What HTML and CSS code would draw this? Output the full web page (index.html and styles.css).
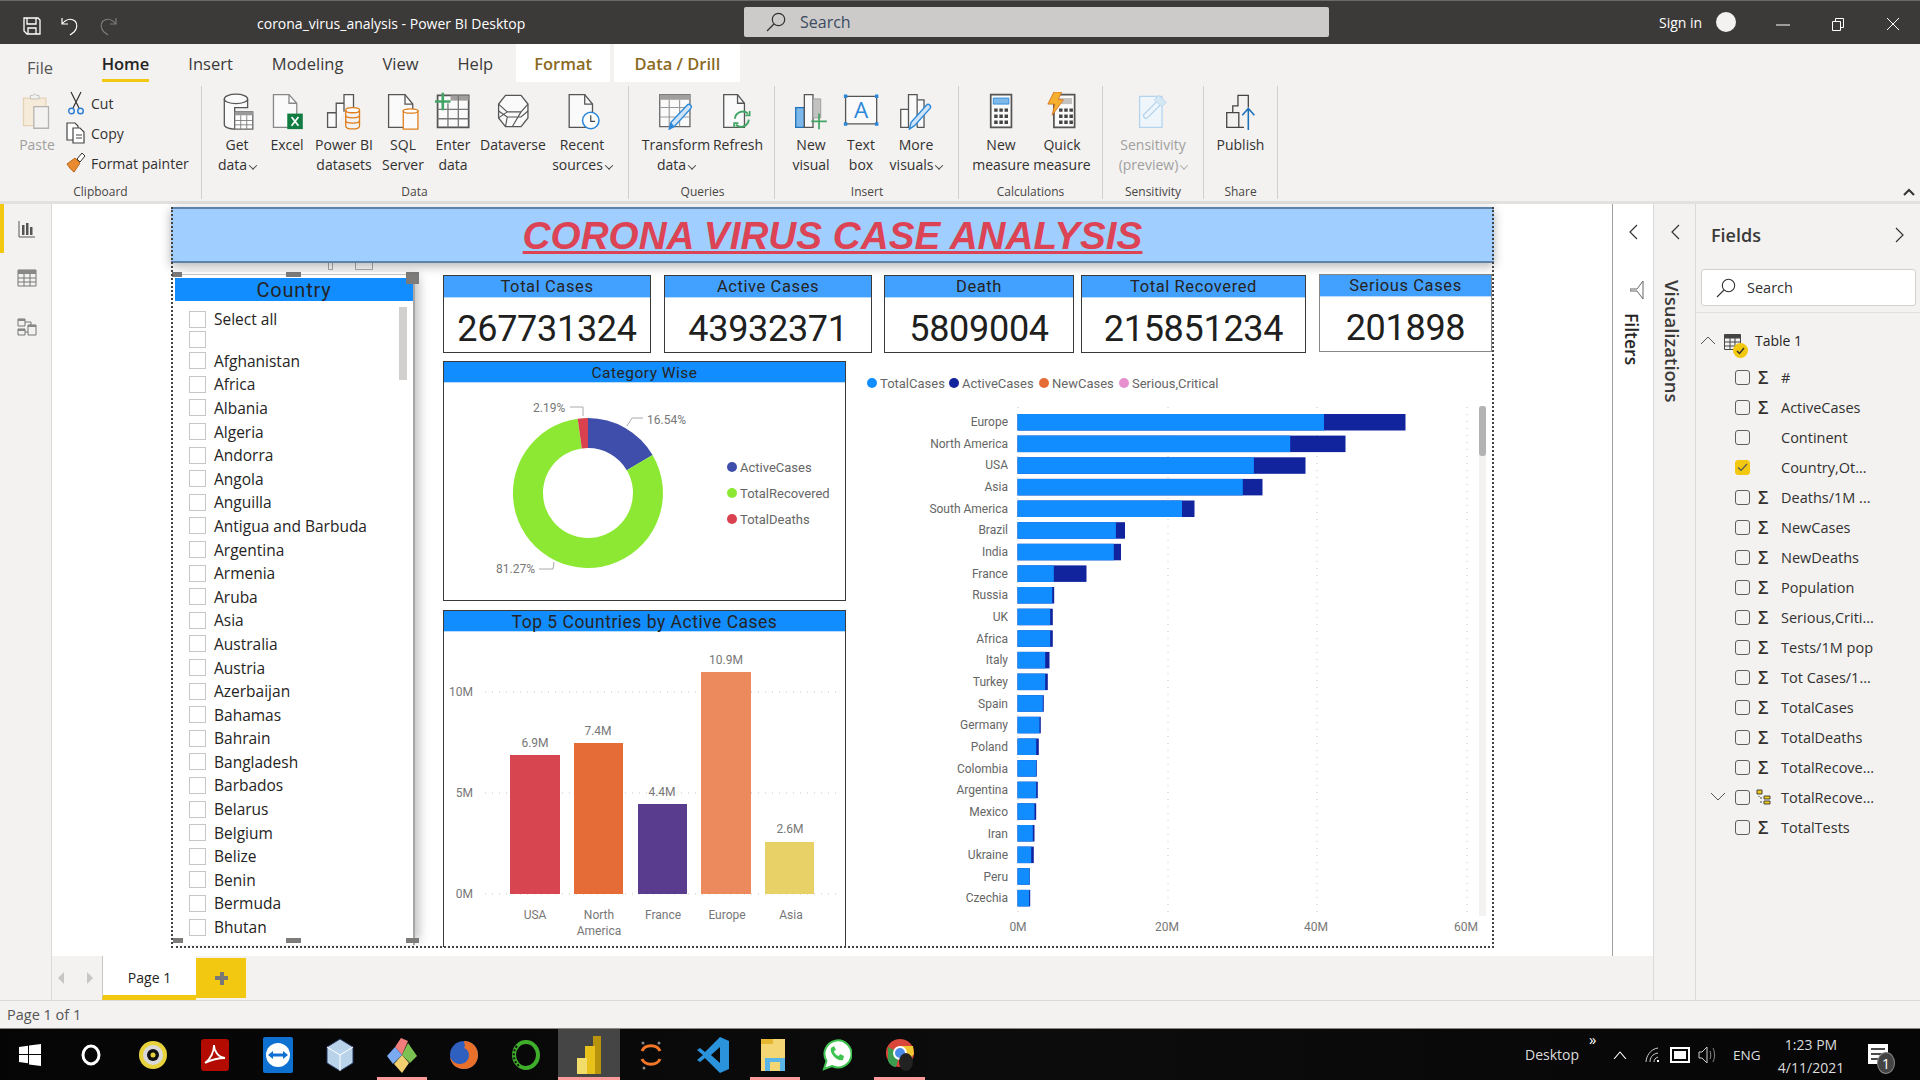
FILE: index.html
```html
<!DOCTYPE html>
<html lang="en">
<head>
    <meta charset="UTF-8">
    <title>corona_virus_analysis - Power BI Desktop</title>
    <link rel="stylesheet" href="styles.css">
</head>
<body>

    <!-- Title bar -->
    <div class="titlebar">
        <div class="quick-icons">
            <svg width="20" height="20" viewBox="0 0 20 20" class="ic-save"><path d="M2 2h14l2 2v14H5l-3-3z" fill="none" stroke="#fff" stroke-width="1.3"/><path d="M5 2v6h9V2M6 18v-6h8v6" fill="none" stroke="#fff" stroke-width="1.3"/></svg>
            <svg width="18" height="20" viewBox="0 0 18 20" class="ic-undo"><path d="M1 2v6h6M1 8c4-5 9-6 13-3 3 3 2 8-1 11l-4 3" fill="none" stroke="#fff" stroke-width="1.2"/></svg>
            <svg width="18" height="20" viewBox="0 0 18 20" class="ic-redo"><path d="M17 2v6h-6M17 8c-4-5-9-6-13-3-3 3-2 8 1 11l4 3" fill="none" stroke="#7d7c7a" stroke-width="1.2"/></svg>
        </div>
        <div class="doc-title">corona_virus_analysis - Power BI Desktop</div>
        <div class="top-search">
            <svg width="20" height="20" viewBox="0 0 20 20"><circle cx="12.5" cy="7.5" r="6.2" fill="none" stroke="#323130" stroke-width="1.2"/><path d="M8 12l-7 7" stroke="#323130" stroke-width="1.2"/></svg>
            <span>Search</span>
        </div>
        <div class="sign-in">Sign in</div>
        <div class="avatar"></div>
        <svg class="win-btn win-min" width="14" height="14" viewBox="0 0 14 14"><path d="M0 8h14" stroke="#fff" stroke-width="1"/></svg>
        <svg class="win-btn win-max" width="14" height="14" viewBox="0 0 14 14"><path d="M1.5 4.5h8v9h-8zM4.5 4.5v-3h8v9h-3" fill="none" stroke="#fff" stroke-width="1"/></svg>
        <svg class="win-btn win-close" width="14" height="14" viewBox="0 0 14 14"><path d="M1 1l12 12M13 1L1 13" stroke="#fff" stroke-width="1"/></svg>
    </div>

    <!-- Ribbon -->
    <div class="ribbon">
        <div class="tabs">
            <div class="tab tab-file">File</div>
            <div class="tab tab-active">Home</div>
            <div class="tab">Insert</div>
            <div class="tab">Modeling</div>
            <div class="tab">View</div>
            <div class="tab">Help</div>
            <div class="tab tab-context">Format</div>
            <div class="tab tab-context tab-drill">Data / Drill</div>
        </div>
        <div class="groups">
            <div class="rgroup g-clipboard">
                <div class="rbuttons">
                    <div class="rbtn w54 disabled">
                        <svg class="ricon" width="40" height="44" viewBox="0 0 40 44"><path d="M4 7h26v32H4z" fill="#f6ead8" stroke="#e5d3b8" stroke-width="1.5"/><path d="M12 8V4h3l2-2 2 2h3v4z" fill="#f3f2f1" stroke="#bbb"/><path d="M16 17h17v25H16z" fill="#f3f2f1" stroke="#b5b3b1" stroke-width="1.5"/></svg>
                        <div>Paste</div>
                    </div>
                    <div class="small-btns">
                        <div class="small-btn"><svg width="18" height="24" viewBox="0 0 18 24"><path d="M4 1l8 16M14 1L6 17" stroke="#333" stroke-width="1.2" fill="none"/><circle cx="4.5" cy="20" r="2.8" fill="none" stroke="#2b7cd3" stroke-width="1.4"/><circle cx="13.5" cy="20" r="2.8" fill="none" stroke="#2b7cd3" stroke-width="1.4"/></svg><span>Cut</span></div>
                        <div class="small-btn"><svg width="20" height="22" viewBox="0 0 20 22"><path d="M1 1h8l3 3v14H1z" fill="#fff" stroke="#444" stroke-width="1.2"/><path d="M7 6h7l4 4v11H7z" fill="#fff" stroke="#444" stroke-width="1.2"/><path d="M10 13h6M10 16h6" stroke="#444"/></svg><span>Copy</span></div>
                        <div class="small-btn"><svg width="20" height="22" viewBox="0 0 20 22"><path d="M1 12l8-6 5 5-6 9c-3-2-5-5-7-8z" fill="#ea8a2e" stroke="#b9651a"/><path d="M11 7l5-6 3 3-5 6z" fill="#fff" stroke="#333"/></svg><span>Format painter</span></div>
                    </div>
                </div>
                <div class="rlabel">Clipboard</div>
            </div>

            <div class="rgroup g-data">
                <div class="rbuttons">
                    <div class="rbtn w52">
                        <svg class="ricon" width="40" height="44" viewBox="0 0 40 44"><path d="M5 8v30c0 3 6 5 12 5V18h15V8" fill="#fafafa" stroke="#555" stroke-width="1.5"/><ellipse cx="18.500" cy="8" rx="13.500" ry="5.500" fill="#fafafa" stroke="#555" stroke-width="1.5"/><path d="M17 23h21v20H17z" fill="#fff" stroke="#666" stroke-width="1.5"/><path d="M17 23h21v4H17z" fill="#999"/><path d="M24 27v16M31 27v16M17 33h21M17 38h21" stroke="#777"/></svg>
                        <div>Get<br>data<span class="caret"></span></div>
                    </div>
                    <div class="rbtn w48">
                        <svg class="ricon" width="40" height="44" viewBox="0 0 40 44"><path d="M4 3h18l9 10v28H4z" fill="#fafafa" stroke="#888" stroke-width="1.5"/><path d="M22 3v10h9" fill="none" stroke="#888" stroke-width="1.5"/><path d="M20 25h18v18H20z" fill="#107c41"/><path d="M25 29l8 10M33 29l-8 10" stroke="#fff" stroke-width="2"/></svg>
                        <div>Excel</div>
                    </div>
                    <div class="rbtn w66">
                        <svg class="ricon" width="44" height="44" viewBox="0 0 44 44"><path d="M3 24h10v17H3zM13 41V13h9v10M22 13V3h11v15" fill="#fafafa" stroke="#555" stroke-width="1.5"/><ellipse cx="32" cy="21" rx="8" ry="3" fill="#fff" stroke="#e07d1a" stroke-width="1.5"/><path d="M24 21v18c0 5 16 5 16 0V21M24 27c0 4 16 4 16 0M24 33c0 4 16 4 16 0" fill="none" stroke="#e07d1a" stroke-width="1.5"/></svg>
                        <div>Power BI<br>datasets</div>
                    </div>
                    <div class="rbtn w52">
                        <svg class="ricon" width="40" height="44" viewBox="0 0 40 44"><path d="M3 3h19l9 11v27H3z" fill="#fafafa" stroke="#555" stroke-width="1.5"/><path d="M22 3v11h9" fill="none" stroke="#555" stroke-width="1.5"/><path d="M20 22h17v21H20z" fill="#fafafa" stroke="#e07d1a" stroke-width="1.5"/><ellipse cx="28.500" cy="22" rx="8.500" ry="2.500" fill="#fff" stroke="#e07d1a" stroke-width="1.5"/></svg>
                        <div>SQL<br>Server</div>
                    </div>
                    <div class="rbtn w48">
                        <svg class="ricon" width="42" height="44" viewBox="0 0 42 44"><path d="M3 4h36v37H3z" fill="#fafafa" stroke="#555" stroke-width="2"/><path d="M18 4h21v6H18z" fill="#a19f9d"/><path d="M3 20h36M3 31h36M15 13v28M27 4v37" stroke="#777" stroke-width="1.5"/><path d="M0 11h18M9 1v20" stroke="#43a565" stroke-width="3"/></svg>
                        <div>Enter<br>data</div>
                    </div>
                    <div class="rbtn w72">
                        <svg class="ricon" width="40" height="44" viewBox="0 0 40 44"><path d="M11 4h18l8 10v16l-8 10H11L3 30V14z" fill="#fafafa" stroke="#555" stroke-width="1.5"/><path d="M3 14l10 9h16l8-9M3 22l10 7h16l8-7M3 30l10-7M13 29l-2 11M29 23l-10 17" fill="none" stroke="#555" stroke-width="1.3"/></svg>
                        <div>Dataverse</div>
                    </div>
                    <div class="rbtn w66">
                        <svg class="ricon" width="42" height="44" viewBox="0 0 42 44"><path d="M6 3h18l9 11v27H6z" fill="#fafafa" stroke="#555" stroke-width="1.5"/><path d="M24 3v11h9" fill="none" stroke="#555" stroke-width="1.5"/><circle cx="31" cy="33" r="9.500" fill="#fff" stroke="#2b88d8" stroke-width="1.8"/><path d="M31 27v7h5" fill="none" stroke="#444" stroke-width="1.4"/></svg>
                        <div>Recent<br>sources<span class="caret"></span></div>
                    </div>
                </div>
                <div class="rlabel">Data</div>
            </div>

            <div class="rgroup g-queries">
                <div class="rbuttons">
                    <div class="rbtn w70">
                        <svg class="ricon" width="42" height="44" viewBox="0 0 42 44"><path d="M2 3h35v37H2z" fill="#fafafa" stroke="#666" stroke-width="1.5"/><path d="M2 3h35v6H2z" fill="#a19f9d"/><path d="M2 18h35M2 29h35M13 9v31M25 9v31" stroke="#999" stroke-width="1.3"/><path d="M13 43l2-8 19-20c2-2 6 1 4 4L19 40z" fill="#cfe4f7" stroke="#2b88d8" stroke-width="1.6"/><path d="M13 43l2-8 4 5z" fill="#2b88d8"/></svg>
                        <div>Transform<br>data<span class="caret"></span></div>
                    </div>
                    <div class="rbtn w54b">
                        <svg class="ricon" width="36" height="44" viewBox="0 0 36 44"><path d="M2 3h16l8 10v28H2z" fill="#fafafa" stroke="#555" stroke-width="1.5"/><path d="M18 3v10h8" fill="none" stroke="#555" stroke-width="1.5"/><path d="M15 31a9 9 0 0 1 15-6M31 32a9 9 0 0 1-15 6" fill="none" stroke="#43a565" stroke-width="2.200"/><path d="M27 27h5v-5M19 36h-5v5" fill="none" stroke="#43a565" stroke-width="2"/></svg>
                        <div>Refresh</div>
                    </div>
                </div>
                <div class="rlabel">Queries</div>
            </div>

            <div class="rgroup g-insert">
                <div class="rbuttons">
                    <div class="rbtn w50">
                        <svg class="ricon" width="40" height="44" viewBox="0 0 40 44"><path d="M2 18h10v23H2z" fill="#7cb9ea" stroke="#1d6fb8" stroke-width="1.500"/><path d="M12 3h10v38H12z" fill="#fafafa" stroke="#555" stroke-width="1.500"/><path d="M22 8h9v22H22z" fill="#c4c2c0" stroke="#999"/><path d="M20 34h18M29 25v18" stroke="#43a565" stroke-width="2"/></svg>
                        <div>New<br>visual</div>
                    </div>
                    <div class="rbtn w50">
                        <svg class="ricon" width="42" height="44" viewBox="0 0 42 44"><path d="M3 5h36v32H3z" fill="#fafafa" stroke="#555" stroke-width="1.500"/><path d="M1 3h4v4H1zM37 3h4v4h-4zM1 35h4v4H1zM37 35h4v4h-4z" fill="#2b88d8"/><text x="21" y="30" class="icon-letter">A</text></svg>
                        <div>Text<br>box</div>
                    </div>
                    <div class="rbtn w60">
                        <svg class="ricon" width="40" height="44" viewBox="0 0 40 44"><path d="M2 20h9v21H2zM11 41V3h10v38M21 9h8v32h-8" fill="#fafafa" stroke="#555" stroke-width="1.500"/><path d="M12 43l2-8 18-20c2-2 6 1 4 4L18 39z" fill="#cfe4f7" stroke="#2b88d8" stroke-width="1.600"/></svg>
                        <div>More<br>visuals<span class="caret"></span></div>
                    </div>
                </div>
                <div class="rlabel">Insert</div>
            </div>

            <div class="rgroup g-calc">
                <div class="rbuttons">
                    <div class="rbtn w64">
                        <svg class="ricon" width="28" height="44" viewBox="0 0 28 44"><path d="M2 3h24v38H2z" fill="#fafafa" stroke="#555" stroke-width="2"/><path d="M5 7h18v7H5z" fill="#7cb9ea" stroke="#2b88d8"/><path d="M6 19h4v4H6zM12 19h4v4h-4zM18 19h4v4h-4zM6 26h4v4H6zM12 26h4v4h-4zM18 26h4v4h-4zM6 33h4v4H6zM12 33h4v4h-4zM18 33h4v4h-4z" fill="#444"/></svg>
                        <div>New<br>measure</div>
                    </div>
                    <div class="rbtn w58">
                        <svg class="ricon" width="34" height="44" viewBox="0 0 34 44"><path d="M8 3h24v38H8z" fill="#fafafa" stroke="#555" stroke-width="2"/><path d="M13 7h16v7H13z" fill="#c4c2c0"/><path d="M14 19h4v4h-4zM20 19h4v4h-4zM26 19h4v4h-4zM14 26h4v4h-4zM20 26h4v4h-4zM26 26h4v4h-4zM14 33h4v4h-4zM20 33h4v4h-4zM26 33h4v4h-4z" fill="#444"/><path d="M8 0h9l-4 9h6L6 27l3-13H1z" fill="#f4b02e" stroke="#d9701a"/></svg>
                        <div>Quick<br>measure</div>
                    </div>
                </div>
                <div class="rlabel">Calculations</div>
            </div>

            <div class="rgroup g-center g-sens">
                <div class="rbuttons">
                    <div class="rbtn w90 disabled">
                        <svg class="ricon" width="36" height="44" viewBox="0 0 36 44"><path d="M3 5h26v36H3z" fill="#eef5fb" stroke="#b5d4ec" stroke-width="1.500"/><path d="M8 26l16-16c3-3 7 2 4 4L12 30c-2 2-6-2-4-4z" fill="none" stroke="#b5d4ec" stroke-width="1.500"/><path d="M25 4l9 8-5 5-9-8z" fill="#d7e8f5" stroke="#b5d4ec"/></svg>
                        <div>Sensitivity<br>(preview)<span class="caret"></span></div>
                    </div>
                </div>
                <div class="rlabel">Sensitivity</div>
            </div>

            <div class="rgroup g-center g-share">
                <div class="rbuttons">
                    <div class="rbtn w70">
                        <svg class="ricon" width="36" height="44" viewBox="0 0 36 44"><path d="M2 24h14v17H2zM9 24V16h6V4h12v14M16 41h6" fill="#f3f2f1" stroke="#444" stroke-width="1.500"/><path d="M27 44V20M20 27l7-8 7 8" fill="none" stroke="#1d6fb8" stroke-width="1.800"/></svg>
                        <div>Publish</div>
                    </div>
                </div>
                <div class="rlabel">Share</div>
            </div>
        </div>
        <svg class="ribbon-collapse" width="12" height="8" viewBox="0 0 12 8"><path d="M1 7l5-5 5 5" fill="none" stroke="#333" stroke-width="2"/></svg>
    </div>

    <div class="workspace">

        <!-- Left rail -->
        <div class="rail">
            <div class="rail-item rail-active"><svg width="18" height="18" viewBox="0 0 18 18"><path d="M1 1v16h16" fill="none" stroke="#555"/><path d="M4 5h2.500v10H4zM8 3h2.500v12H8zM12 7h2.500v8H12z" fill="#555"/></svg></div>
            <div class="rail-item"><svg width="20" height="18" viewBox="0 0 20 18"><path d="M1 1h18v16H1z" fill="none" stroke="#777"/><path d="M1 1h18v4H1z" fill="#888"/><path d="M1 9h18M1 13h18M7 5v12M13 5v12" stroke="#777"/></svg></div>
            <div class="rail-item"><svg width="20" height="20" viewBox="0 0 20 20"><path d="M1 2h7v7H1zM1 12h7v6H1zM11 8h8v10h-8z" fill="none" stroke="#777"/><path d="M1 2h7v2H1zM1 12h7v2H1zM11 8h8v2h-8z" fill="#888"/><path d="M8 5h6v3M8 15h3" fill="none" stroke="#777"/></svg></div>
        </div>

        <div class="center">
            <div class="canvas-row">
                <div class="canvas">
                    <div class="report">

                        <div class="banner"><span>CORONA VIRUS CASE ANALYSIS</span></div>

                        <div class="report-body">

                            <!-- Slicer -->
                            <div class="slicer">
                                <span class="header-stub stub-a"></span>
                                <span class="header-stub stub-b"></span>
                                <span class="handle h-tl"></span>
                                <span class="handle h-tm"></span>
                                <span class="handle h-tr"></span>
                                <span class="handle h-bl"></span>
                                <span class="handle h-bm"></span>
                                <span class="handle h-br"></span>
                                <div class="slicer-head">Country</div>
                                <div class="slicer-scroll"></div>
                                <div class="slicer-items">
                                    <div class="slicer-row row-first"><i></i>Select all</div>
                                    <div class="slicer-row row-blank"><i></i></div>
                                    <div class="slicer-row"><i></i>Afghanistan</div>
                                    <div class="slicer-row"><i></i>Africa</div>
                                    <div class="slicer-row"><i></i>Albania</div>
                                    <div class="slicer-row"><i></i>Algeria</div>
                                    <div class="slicer-row"><i></i>Andorra</div>
                                    <div class="slicer-row"><i></i>Angola</div>
                                    <div class="slicer-row"><i></i>Anguilla</div>
                                    <div class="slicer-row"><i></i>Antigua and Barbuda</div>
                                    <div class="slicer-row"><i></i>Argentina</div>
                                    <div class="slicer-row"><i></i>Armenia</div>
                                    <div class="slicer-row"><i></i>Aruba</div>
                                    <div class="slicer-row"><i></i>Asia</div>
                                    <div class="slicer-row"><i></i>Australia</div>
                                    <div class="slicer-row"><i></i>Austria</div>
                                    <div class="slicer-row"><i></i>Azerbaijan</div>
                                    <div class="slicer-row"><i></i>Bahamas</div>
                                    <div class="slicer-row"><i></i>Bahrain</div>
                                    <div class="slicer-row"><i></i>Bangladesh</div>
                                    <div class="slicer-row"><i></i>Barbados</div>
                                    <div class="slicer-row"><i></i>Belarus</div>
                                    <div class="slicer-row"><i></i>Belgium</div>
                                    <div class="slicer-row"><i></i>Belize</div>
                                    <div class="slicer-row"><i></i>Benin</div>
                                    <div class="slicer-row"><i></i>Bermuda</div>
                                    <div class="slicer-row"><i></i>Bhutan</div>
                                </div>
                            </div>

                            <div class="report-main">

                                <!-- KPI cards -->
                                <div class="kpi-row">
                                    <div class="kpi kpi-total"><div class="kpi-head">Total Cases</div><div class="kpi-value">267731324</div></div>
                                    <div class="kpi kpi-active"><div class="kpi-head">Active Cases</div><div class="kpi-value">43932371</div></div>
                                    <div class="kpi kpi-death"><div class="kpi-head">Death</div><div class="kpi-value">5809004</div></div>
                                    <div class="kpi kpi-recovered"><div class="kpi-head">Total Recovered</div><div class="kpi-value">215851234</div></div>
                                    <div class="kpi kpi-serious"><div class="kpi-head">Serious Cases</div><div class="kpi-value">201898</div></div>
                                </div>

                                <div class="chart-row">
                                    <div class="chart-col">

                                        <!-- Donut -->
                                        <div class="panel panel-donut">
                                            <div class="panel-head">Category Wise</div>
                                            <svg class="chart" width="401" height="218" viewBox="444 383 401 218">
                                                <path d="M588 418A75 75 0 0 1 652.600 455L626.800 470.200A45 45 0 0 0 588 448Z" fill="#3f4eab"/>
                                                <path d="M652.600 455A75 75 0 1 1 577.700 418.700L581.800 448.400A45 45 0 1 0 626.800 470.200Z" fill="#8de834"/>
                                                <path d="M577.700 418.700A75 75 0 0 1 588 418L588 448A45 45 0 0 0 581.800 448.400Z" fill="#d9414f"/>
                                                <path d="M570 407h13v9M643 418h-11l-5 8M539 569h14l1-7" fill="none" stroke="#aaa"/>
                                                <text x="533" y="412" class="tx">2.19%</text>
                                                <text x="647" y="424" class="tx">16.54%</text>
                                                <text x="496" y="573" class="tx">81.27%</text>
                                                <circle cx="732" cy="467" r="5" fill="#3f4eab"/>
                                                <circle cx="732" cy="493" r="5" fill="#8de834"/>
                                                <circle cx="732" cy="519" r="5" fill="#d9414f"/>
                                                <text x="740" y="471.500" class="tx tx-legend">ActiveCases</text>
                                                <text x="740" y="497.500" class="tx tx-legend">TotalRecovered</text>
                                                <text x="740" y="523.500" class="tx tx-legend">TotalDeaths</text>
                                            </svg>
                                        </div>

                                        <!-- Top 5 -->
                                        <div class="panel panel-top5">
                                            <div class="panel-head head-top5">Top 5 Countries by Active Cases</div>
                                            <svg class="chart" width="401" height="315" viewBox="444 632 401 315">
                                                <path d="M485 692H839M485 793H839M485 894H839" class="grid"/>
                                                <rect x="510" y="755" width="50" height="139" fill="#d64550"/>
                                                <rect x="574" y="743" width="49" height="151" fill="#e66c37"/>
                                                <rect x="638" y="804" width="49" height="90" fill="#5a3c8f"/>
                                                <rect x="701" y="672" width="50" height="222" fill="#ec8a5e"/>
                                                <rect x="765" y="842" width="49" height="52" fill="#e8d166"/>
                                                <text x="473" y="696" class="tx ta-end">10M</text>
                                                <text x="473" y="797" class="tx ta-end">5M</text>
                                                <text x="473" y="898" class="tx ta-end">0M</text>
                                                <text x="535" y="747" class="tx ta-mid">6.9M</text>
                                                <text x="598" y="735" class="tx ta-mid">7.4M</text>
                                                <text x="662" y="796" class="tx ta-mid">4.4M</text>
                                                <text x="726" y="664" class="tx ta-mid">10.9M</text>
                                                <text x="790" y="833" class="tx ta-mid">2.6M</text>
                                                <text x="535" y="919" class="tx ta-mid">USA</text>
                                                <text x="599" y="919" class="tx ta-mid">North</text>
                                                <text x="599" y="935" class="tx ta-mid">America</text>
                                                <text x="663" y="919" class="tx ta-mid">France</text>
                                                <text x="727" y="919" class="tx ta-mid">Europe</text>
                                                <text x="791" y="919" class="tx ta-mid">Asia</text>
                                            </svg>
                                        </div>
                                    </div>

                                    <!-- Stacked bars -->
                                    <svg class="chart barchart" width="647" height="581" viewBox="846 366 647 581">
                                        <circle cx="872" cy="383" r="5" fill="#118dff"/><text x="880" y="387.500" class="tx tx-legend">TotalCases</text>
                                        <circle cx="954" cy="383" r="5" fill="#12239e"/><text x="962" y="387.500" class="tx tx-legend">ActiveCases</text>
                                        <circle cx="1044" cy="383" r="5" fill="#e66c37"/><text x="1052" y="387.500" class="tx tx-legend">NewCases</text>
                                        <circle cx="1124" cy="383" r="5" fill="#e88fd0"/><text x="1132" y="387.500" class="tx tx-legend">Serious,Critical</text>
                                        <path d="M1018 407V916M1168 407V916M1317 407V916M1467 407V916" class="grid"/>
                                        <rect x="1479" y="406" width="7" height="510" fill="#f3f2f1"/>
                                        <rect x="1479" y="406" width="7" height="50" rx="3" fill="#b3b3b3"/>

                                        <g class="bar-labels">
                                            <text x="1008" y="426">Europe</text>
                                            <text x="1008" y="448">North America</text>
                                            <text x="1008" y="469">USA</text>
                                            <text x="1008" y="491">Asia</text>
                                            <text x="1008" y="513">South America</text>
                                            <text x="1008" y="534">Brazil</text>
                                            <text x="1008" y="556">India</text>
                                            <text x="1008" y="578">France</text>
                                            <text x="1008" y="599">Russia</text>
                                            <text x="1008" y="621">UK</text>
                                            <text x="1008" y="643">Africa</text>
                                            <text x="1008" y="664">Italy</text>
                                            <text x="1008" y="686">Turkey</text>
                                            <text x="1008" y="708">Spain</text>
                                            <text x="1008" y="729">Germany</text>
                                            <text x="1008" y="751">Poland</text>
                                            <text x="1008" y="773">Colombia</text>
                                            <text x="1008" y="794">Argentina</text>
                                            <text x="1008" y="816">Mexico</text>
                                            <text x="1008" y="838">Iran</text>
                                            <text x="1008" y="859">Ukraine</text>
                                            <text x="1008" y="881">Peru</text>
                                            <text x="1008" y="902">Czechia</text>
                                        </g>

                                        <g fill="#12239e">
                                            <rect x="1017.500" y="414" width="388" height="16.500"/>
                                            <rect x="1017.500" y="435.600" width="328" height="16.500"/>
                                            <rect x="1017.500" y="457.300" width="288" height="16.500"/>
                                            <rect x="1017.500" y="478.900" width="245" height="16.500"/>
                                            <rect x="1017.500" y="500.500" width="177" height="16.500"/>
                                            <rect x="1017.500" y="522.200" width="107.500" height="16.500"/>
                                            <rect x="1017.500" y="543.800" width="103.500" height="16.500"/>
                                            <rect x="1017.500" y="565.400" width="69" height="16.500"/>
                                            <rect x="1017.500" y="587" width="36.700" height="16.500"/>
                                            <rect x="1017.500" y="608.700" width="35.300" height="16.500"/>
                                            <rect x="1017.500" y="630.300" width="35.300" height="16.500"/>
                                            <rect x="1017.500" y="651.900" width="32" height="16.500"/>
                                            <rect x="1017.500" y="673.600" width="30.300" height="16.500"/>
                                            <rect x="1017.500" y="695.200" width="26.300" height="16.500"/>
                                            <rect x="1017.500" y="716.800" width="23.300" height="16.500"/>
                                            <rect x="1017.500" y="738.500" width="21.300" height="16.500"/>
                                            <rect x="1017.500" y="760.100" width="19.300" height="16.500"/>
                                            <rect x="1017.500" y="781.700" width="20.300" height="16.500"/>
                                            <rect x="1017.500" y="803.300" width="18.700" height="16.500"/>
                                            <rect x="1017.500" y="825" width="17" height="16.500"/>
                                            <rect x="1017.500" y="846.600" width="16.300" height="16.500"/>
                                            <rect x="1017.500" y="868.200" width="12.300" height="16.500"/>
                                            <rect x="1017.500" y="889.900" width="12.700" height="16.500"/>
                                        </g>
                                        <g fill="#118dff">
                                            <rect x="1017.500" y="414" width="306.500" height="16.500"/>
                                            <rect x="1017.500" y="435.600" width="272.700" height="16.500"/>
                                            <rect x="1017.500" y="457.300" width="236.400" height="16.500"/>
                                            <rect x="1017.500" y="478.900" width="225.300" height="16.500"/>
                                            <rect x="1017.500" y="500.500" width="164.500" height="16.500"/>
                                            <rect x="1017.500" y="522.200" width="98.400" height="16.500"/>
                                            <rect x="1017.500" y="543.800" width="96.300" height="16.500"/>
                                            <rect x="1017.500" y="565.400" width="36.300" height="16.500"/>
                                            <rect x="1017.500" y="587" width="34.700" height="16.500"/>
                                            <rect x="1017.500" y="608.700" width="32.700" height="16.500"/>
                                            <rect x="1017.500" y="630.300" width="32.700" height="16.500"/>
                                            <rect x="1017.500" y="651.900" width="27.700" height="16.500"/>
                                            <rect x="1017.500" y="673.600" width="27.700" height="16.500"/>
                                            <rect x="1017.500" y="695.200" width="25.300" height="16.500"/>
                                            <rect x="1017.500" y="716.800" width="22" height="16.500"/>
                                            <rect x="1017.500" y="738.500" width="18.700" height="16.500"/>
                                            <rect x="1017.500" y="760.100" width="18.700" height="16.500"/>
                                            <rect x="1017.500" y="781.700" width="18.700" height="16.500"/>
                                            <rect x="1017.500" y="803.300" width="17" height="16.500"/>
                                            <rect x="1017.500" y="825" width="15.300" height="16.500"/>
                                            <rect x="1017.500" y="846.600" width="13.700" height="16.500"/>
                                            <rect x="1017.500" y="868.200" width="12" height="16.500"/>
                                            <rect x="1017.500" y="889.900" width="11.700" height="16.500"/>
                                        </g>
                                        <text x="1018" y="931" class="tx ta-mid">0M</text>
                                        <text x="1167" y="931" class="tx ta-mid">20M</text>
                                        <text x="1316" y="931" class="tx ta-mid">40M</text>
                                        <text x="1466" y="931" class="tx ta-mid">60M</text>
                                    </svg>
                                </div>
                            </div>
                        </div>

                        <div class="focus-frame"></div>
                    </div>
                </div>

                <!-- Filters pane -->
                <div class="filters-pane">
                    <svg class="chev" width="10" height="16" viewBox="0 0 10 16"><path d="M9 1L2 8l7 7" fill="none" stroke="#333" stroke-width="1.200"/></svg>
                    <svg class="funnel" width="14" height="22" viewBox="0 0 14 22"><path d="M0 10h7l6-8v18l-6-8H0z" fill="none" stroke="#666"/></svg>
                    <div class="side-title filters-title">Filters</div>
                </div>
            </div>

            <!-- Page tabs -->
            <div class="pagebar">
                <svg class="page-nav" width="8" height="14" viewBox="0 0 8 14"><path d="M7 1L1 7l6 6z" fill="#c8c6c4"/></svg>
                <svg class="page-nav nav-next" width="8" height="14" viewBox="0 0 8 14"><path d="M1 1l6 6-6 6z" fill="#c8c6c4"/></svg>
                <div class="page-tab">Page 1</div>
                <div class="page-add"><span></span></div>
            </div>
        </div>

        <!-- Visualizations pane (collapsed) -->
        <div class="viz-pane">
            <svg class="chev" width="10" height="16" viewBox="0 0 10 16"><path d="M9 1L2 8l7 7" fill="none" stroke="#333" stroke-width="1.200"/></svg>
            <div class="side-title viz-title">Visualizations</div>
        </div>

        <!-- Fields pane -->
        <div class="fields-pane">
            <div class="fields-head">
                <span>Fields</span>
                <svg width="10" height="16" viewBox="0 0 10 16"><path d="M1 1l7 7-7 7" fill="none" stroke="#333" stroke-width="1.200"/></svg>
            </div>
            <div class="fields-search">
                <svg width="20" height="20" viewBox="0 0 20 20"><circle cx="12.500" cy="7.500" r="6.200" fill="none" stroke="#323130" stroke-width="1.100"/><path d="M8 12l-7 7" stroke="#323130" stroke-width="1.100"/></svg>
                <span>Search</span>
            </div>
            <div class="fields-table">
                <svg class="tbl-chev" width="16" height="9" viewBox="0 0 16 9"><path d="M1 8l7-7 7 7" fill="none" stroke="#555"/></svg>
                <svg class="tbl-icon" width="17" height="16" viewBox="0 0 17 16"><path d="M.5.5h16v15H.5z" fill="#f3f2f1" stroke="#444"/><path d="M.5.5h16v4H.5z" fill="#444"/><path d="M.5 8h16M.500 12h16M6 4v12M11 4v12" stroke="#444"/></svg>
                <span class="tbl-badge"><svg width="9" height="8" viewBox="0 0 9 8"><path d="M1 4l2.500 2.500L8 1" fill="none" stroke="#333" stroke-width="1.500"/></svg></span>
                <span>Table 1</span>
            </div>
            <div class="field-row"><i class="box"></i><b>Σ</b><span>#</span></div>
            <div class="field-row"><i class="box"></i><b>Σ</b><span>ActiveCases</span></div>
            <div class="field-row"><i class="box"></i><b></b><span>Continent</span></div>
            <div class="field-row"><i class="box box-on"><svg width="11" height="9" viewBox="0 0 11 9"><path d="M1 4.500l3 3L10 1" fill="none" stroke="#555" stroke-width="1.200"/></svg></i><b></b><span>Country,Ot...</span></div>
            <div class="field-row"><i class="box"></i><b>Σ</b><span>Deaths/1M ...</span></div>
            <div class="field-row"><i class="box"></i><b>Σ</b><span>NewCases</span></div>
            <div class="field-row"><i class="box"></i><b>Σ</b><span>NewDeaths</span></div>
            <div class="field-row"><i class="box"></i><b>Σ</b><span>Population</span></div>
            <div class="field-row"><i class="box"></i><b>Σ</b><span>Serious,Criti...</span></div>
            <div class="field-row"><i class="box"></i><b>Σ</b><span>Tests/1M pop</span></div>
            <div class="field-row"><i class="box"></i><b>Σ</b><span>Tot Cases/1...</span></div>
            <div class="field-row"><i class="box"></i><b>Σ</b><span>TotalCases</span></div>
            <div class="field-row"><i class="box"></i><b>Σ</b><span>TotalDeaths</span></div>
            <div class="field-row"><i class="box"></i><b>Σ</b><span>TotalRecove...</span></div>
            <div class="field-row">
                <svg class="row-chev" width="16" height="9" viewBox="0 0 16 9"><path d="M1 1l7 7 7-7" fill="none" stroke="#555"/></svg>
                <i class="box"></i>
                <b><svg width="15" height="16" viewBox="0 0 15 16"><path d="M1 1h5v4H1zM8 7h6v3H8zM8 12h6v3H8z" fill="#f2c811" stroke="#444"/><path d="M3 7v1M4 9h2M4 13h2" stroke="#444"/></svg></b>
                <span>TotalRecove...</span>
            </div>
            <div class="field-row"><i class="box"></i><b>Σ</b><span>TotalTests</span></div>
        </div>
    </div>

    <div class="statusbar">Page 1 of 1</div>

    <!-- Windows taskbar -->
    <div class="taskbar">
        <div class="task task-start"><svg width="22" height="22" viewBox="0 0 22 22"><path d="M0 3l9-1.300V10H0zM10 1.500L22 0v10H10zM0 11h9v8.300L0 18zM10 11h12v11l-12-1.600z" fill="#fff"/></svg></div>
        <div class="task"><svg width="22" height="24" viewBox="0 0 22 24"><ellipse cx="11" cy="12" rx="8" ry="9" fill="none" stroke="#fff" stroke-width="3"/></svg></div>
        <div class="task"><svg width="30" height="30" viewBox="0 0 30 30"><circle cx="15" cy="15" r="14" fill="#e8d23c"/><circle cx="15" cy="15" r="10" fill="#d9d9d9"/><circle cx="15" cy="15" r="6" fill="#111"/><circle cx="15" cy="15" r="2.500" fill="#e8d23c"/></svg></div>
        <div class="task"><svg width="28" height="32" viewBox="0 0 28 32"><rect width="28" height="32" rx="3" fill="#b30b00"/><path d="M4 24c6-4 9-12 9-18 0 6 4 12 11 13-7 0-14 2-20 5z" fill="none" stroke="#fff" stroke-width="1.800"/></svg></div>
        <div class="task"><svg width="30" height="36" viewBox="0 0 30 36"><rect width="30" height="36" rx="2" fill="#0e70d1"/><circle cx="15" cy="18" r="12" fill="#fff"/><path d="M5 18l5-4v2.500h10V14l5 4-5 4v-2.500H10V22z" fill="#0e70d1"/></svg></div>
        <div class="task"><svg width="28" height="34" viewBox="0 0 28 34"><path d="M14 1l13 8v16l-13 8-13-8V9z" fill="#b9d3ea" stroke="#25365a"/><path d="M1 9l13 8 13-8M14 17v16" fill="none" stroke="#fff"/></svg></div>
        <div class="task"><svg width="30" height="36" viewBox="0 0 30 36"><path d="M15 18l-7-8 6-9 7 3-6 14z" fill="#f07c7c"/><path d="M15 18L8 10l-8 9 6 8z" fill="#7caaf0"/><path d="M15 18l6-12 9 13-7 7z" fill="#7bc253"/><path d="M15 18l-8 9 8 9 7-10z" fill="#f0d070"/></svg></div>
        <div class="task"><svg width="30" height="32" viewBox="0 0 30 32"><circle cx="15" cy="16" r="14" fill="#2f5fbf"/><path d="M15 2c8 0 14 6 14 14s-6 14-14 14C7 30 2 25 1 18c2 4 5 7 10 7 5 0 9-4 9-9 0-3-2-6-5-7 2-2 0-5 0-7z" fill="#e8702a"/></svg></div>
        <div class="task"><svg width="30" height="32" viewBox="0 0 30 32"><ellipse cx="15" cy="16" rx="12" ry="13" fill="none" stroke="#3fae2a" stroke-width="4"/><path d="M6 7C1 13 2 22 8 27" fill="none" stroke="#111" stroke-width="2" stroke-dasharray="2 2"/></svg></div>
        <div class="task task-open"><svg width="24" height="38" viewBox="0 0 24 38"><path d="M16 0h8v38h-8z" fill="#b8930c"/><path d="M8 10h10v28H8z" fill="#e8c21a"/><path d="M0 22h10v16H0z" fill="#f2dc6a"/></svg></div>
        <div class="task"><svg width="24" height="32" viewBox="0 0 24 32"><path d="M3 12C6 5 18 5 21 12" fill="none" stroke="#f37726" stroke-width="3"/><path d="M3 20c3 7 15 7 18 0" fill="none" stroke="#f37726" stroke-width="3"/><circle cx="4" cy="4" r="1.500" fill="#888"/><circle cx="20" cy="4" r="1.500" fill="#888"/><circle cx="5" cy="29" r="1.500" fill="#888"/></svg></div>
        <div class="task"><svg width="32" height="36" viewBox="0 0 32 36"><path d="M23 0l9 4v28l-9 4L8 21l-5 4-3-2 6-5-6-5 3-2 5 4z" fill="#2a93dc"/><path d="M23 10v16l-9-8z" fill="#0b0b0b"/></svg></div>
        <div class="task"><svg width="28" height="34" viewBox="0 0 28 34"><path d="M0 1h24v32H0z" fill="#f4d774"/><path d="M0 1h12v5H0z" fill="#e6b832"/><path d="M4 20h20v13H4z" fill="#5bb6e8"/><path d="M9 24h10v9H9z" fill="#f4d774"/></svg></div>
        <div class="task"><svg width="30" height="32" viewBox="0 0 30 32"><path d="M2 30l2.500-8A13.500 13.500 0 1 1 10 27z" fill="#fff" stroke="#3fc351" stroke-width="2"/><path d="M9 9c-2 5 6 14 12 12l1-4-4-2-1 2c-2 0-5-3-5-5l2-1-2-4z" fill="#3fc351"/></svg></div>
        <div class="task"><svg width="30" height="34" viewBox="0 0 30 34"><circle cx="15" cy="15" r="14" fill="#d9463a"/><path d="M15 15L3 9v14c2 4 5 6 8 6z" fill="#3c9d4f"/><path d="M15 8h13l1 8-7 8z" fill="#f3c72f"/><circle cx="15" cy="15" r="6" fill="#4a8ae8" stroke="#fff" stroke-width="2"/><ellipse cx="21" cy="24" rx="7" ry="9" fill="#222"/></svg></div>
        <div class="tray">
            <span class="tray-desktop">Desktop</span>
            <span class="tray-more">»</span>
            <svg class="tray-up" width="14" height="8" viewBox="0 0 14 8"><path d="M1 8l6-7 6 7" fill="none" stroke="#fff" stroke-width="1.100"/></svg>
            <svg class="tray-wifi" width="14" height="16" viewBox="0 0 14 16"><path d="M1 15c0-5 4-13 12-14M5 15c0-4 2-8 8-9M9 15c0-2 1-4 4-5" fill="none" stroke="#ccc"/><path d="M12 13h2v2h-2z" fill="#fff"/></svg>
            <svg class="tray-battery" width="20" height="16" viewBox="0 0 20 16"><path d="M1 1h18v14H1z" fill="none" stroke="#fff" stroke-width="2"/><path d="M4 4h12v8H4z" fill="#fff"/></svg>
            <svg class="tray-sound" width="20" height="20" viewBox="0 0 20 20"><path d="M1 7h3l5-5v16l-5-5H1z" fill="none" stroke="#ccc"/><path d="M12 6c1 2 1 6 0 8M15 3c2 4 2 10 0 14" fill="none" stroke="#888"/></svg>
            <span class="tray-lang">ENG</span>
            <div class="tray-clock"><div>1:23 PM</div><div>4/11/2021</div></div>
            <div class="tray-note">
                <svg width="20" height="20" viewBox="0 0 20 20"><path d="M0 0h20v20H0z" fill="#fff"/><path d="M3 5h14M3 10h14M3 15h14" stroke="#111" stroke-width="1.500"/></svg>
                <span>1</span>
            </div>
        </div>
    </div>

</body>
</html>
```

FILE: styles.css
```css
html, body { margin: 0; padding: 0; }
body { width: 1920px; height: 1080px; overflow: hidden; font-family: "Open Sans", "Noto Sans", sans-serif; font-size: 14px; color: #252423; background-color: #f3f2f1; display: flex; flex-direction: column; }

/* title bar */
.titlebar { height: 44px; flex: none; box-sizing: border-box; background-color: #3b3a39; border-top: 1px solid #6b6a69; position: relative; color: #fff; }
.quick-icons svg { position: absolute; top: 15px; }
.ic-save { left: 22px; }
.ic-undo { left: 61px; }
.ic-redo { left: 99px; }
.doc-title { position: absolute; left: 257px; top: 13px; font-size: 14px; line-height: 20px; }
.top-search { position: absolute; left: 744px; top: 6px; width: 585px; height: 30px; background-color: #cdcbc9; border-radius: 2px; display: flex; align-items: center; color: #3b4a63; font-size: 16px; }
.top-search svg { margin-left: 22px; margin-right: 14px; }
.sign-in { position: absolute; left: 1659px; top: 12px; font-size: 14px; line-height: 20px; }
.avatar { position: absolute; left: 1716px; top: 11px; width: 20px; height: 20px; border-radius: 50%; background-color: #f3f2f1; }
.win-btn { position: absolute; top: 16px; }
.win-min { left: 1776px; }
.win-max { left: 1831px; }
.win-close { left: 1886px; }

/* ribbon */
.ribbon { height: 160px; flex: none; box-sizing: border-box; background-color: #f3f2f1; border-bottom: 3px solid #e3e1df; position: relative; }
.tabs { height: 38px; display: flex; padding-left: 7px; margin-bottom: 4px; font-size: 16.500px; }
.tab { padding: 0 19.500px; line-height: 40px; color: #3b3a39; position: relative; }
.tab-file { margin-right: 7px; padding: 4px 22px 0 20px; line-height: 40px; height: 34px; color: #555; }
.tab-active { color: #252423; font-weight: 600; }
.tab-active::after { content: ""; position: absolute; left: 19.500px; right: 19.500px; bottom: 0; height: 3px; background-color: #f2c811; }
.tab-context { background-color: #fff; color: #8a6a1f; font-weight: 600; padding: 0 18.500px; margin-left: 3px; }
.tab-drill { margin-left: 4px; padding: 0 20px; }

.groups { display: flex; height: 113px; }
.rgroup { box-sizing: border-box; display: flex; flex-direction: column; border-right: 1px solid #d2d0ce; }
.rbuttons { display: flex; flex: 1; }
.g-clipboard { width: 202px; padding-left: 10px; }
.g-data { width: 427px; padding-left: 9px; }
.g-queries { width: 146px; padding-left: 12px; }
.g-insert { width: 184px; padding-left: 11px; }
.g-calc { width: 144px; padding-left: 10px; }
.g-sens { width: 101px; }
.g-share { width: 74px; }
.g-center .rbuttons { justify-content: center; }
.rlabel { height: 15px; font-size: 12px; line-height: 16px; text-align: center; color: #484644; margin-left: -10px; }
.g-center .rlabel { margin-left: 0; }

.rbtn { flex: none; display: flex; flex-direction: column; align-items: center; text-align: center; font-size: 14px; line-height: 20px; color: #323130; white-space: nowrap; }
.rbtn > div { margin-top: 5px; }
.ricon { height: 38px; width: auto; margin-top: 6px; flex: none; }
.w48 { width: 48px; }
.w50 { width: 50px; }
.w52 { width: 52px; }
.w54 { width: 54px; }
.w54b { width: 54px; }
.w58 { width: 58px; }
.w60 { width: 60px; }
.w64 { width: 64px; }
.w66 { width: 66px; }
.w70 { width: 70px; }
.w72 { width: 72px; }
.w90 { width: 90px; }
.disabled { color: #a19f9d; }
.caret { display: inline-block; width: 5px; height: 5px; border-right: 1.5px solid #444; border-bottom: 1.5px solid #444; transform: rotate(45deg) translate(-1px, -1px); margin-left: 3px; }
.disabled .caret { border-color: #aaa; }

.small-btns { display: flex; flex-direction: column; margin-left: 2px; padding-top: 2px; }
.small-btn { height: 30px; display: flex; align-items: center; font-size: 14px; color: #323130; }
.small-btn svg { width: 20px; margin-right: 5px; flex: none; }
.ribbon-collapse { position: absolute; right: 5px; bottom: 5px; }

/* workspace */
.workspace { flex: none; height: 796px; display: flex; }
.rail { width: 52px; flex: none; box-sizing: border-box; border-right: 1px solid #dcdad8; padding-left: 2px; }
.rail-item { height: 49px; display: flex; align-items: center; justify-content: center; position: relative; }
.rail-active::before { content: ""; position: absolute; left: -2px; top: 0; bottom: 0; width: 4px; background-color: #f2c811; }

.center { width: 1601px; flex: none; display: flex; flex-direction: column; }
.canvas-row { height: 752px; display: flex; }
.canvas { width: 1560px; flex: none; background-color: #fff; padding: 2px 0 0 119px; box-sizing: border-box; }
.report { width: 1323px; height: 741px; position: relative; }

/* banner */
.banner { height: 56px; box-sizing: border-box; background-color: #a0cfff; border-top: 2px solid #5e83a8; border-bottom: 2px solid #5e83a8; margin-top: 1px; box-shadow: 0 3px 10px rgba(0,0,0,0.3); position: relative; z-index: 2; text-align: center; line-height: 54px; }
.banner span { font-family: "Liberation Sans", Arial, sans-serif; font-size: 38.700px; font-weight: 700; font-style: italic; color: #dc4455; text-decoration: underline; }

.report-body { display: flex; height: 684px; overflow: hidden; }

/* slicer */
.slicer { width: 243px; height: 673px; flex: none; margin: 9px 0 0 1px; position: relative; box-sizing: border-box; border-right: 2px solid #a9a7a5; box-shadow: 8px 0 10px -4px rgba(0,0,0,0.25); background-color: #fff; }
.slicer::before { content: ""; position: absolute; left: 4px; right: 0; top: 2px; height: 1px; background-color: #c8c6c4; }
.slicer-head { height: 23px; margin: 6px 0 0 3px; width: 238px; background-color: #118dff; text-align: center; font-family: Roboto, sans-serif; font-size: 20px; line-height: 24px; letter-spacing: 0.8px; color: #252423; }
.slicer-scroll { position: absolute; left: 227px; top: 35px; width: 8px; height: 73px; background-color: #d2d0ce; }
.slicer-items { padding-top: 7px; }
.slicer-row { height: 23.6px; display: flex; align-items: center; font-size: 15.500px; padding-left: 17px; white-space: nowrap; color: #252423; }
.slicer-row i { width: 15px; height: 15px; flex: none; border: 1px solid #c8c6c4; margin-right: 8px; }
.row-first { height: 22px; }
.row-blank { height: 19px; }
.handle { position: absolute; background-color: #7d7b79; height: 5px; }
.h-tl { left: 0; top: 0; width: 10px; }
.h-tm { left: 114px; top: 0; width: 15px; }
.h-tr { left: 234px; top: 0; width: 13px; height: 12px; }
.h-bl { left: 1px; bottom: 2px; width: 10px; }
.h-bm { left: 114px; bottom: 2px; width: 15px; }
.h-br { left: 234px; bottom: 2px; width: 13px; }
.header-stub { position: absolute; border: 1px solid #aaa; border-top: none; height: 6px; top: -9px; }
.stub-a { left: 156px; width: 3px; }
.stub-b { left: 183px; width: 16px; }

/* kpi cards */
.report-main { width: 1050px; margin-left: 28px; flex: none; }
.kpi-row { display: flex; margin-top: 12px; }
.kpi { height: 78px; box-sizing: border-box; border: 1px solid #3b3a39; background-color: #fff; }
.kpi-head { height: 21px; background-color: #42a0ff; text-align: center; font-family: Roboto, sans-serif; font-size: 16.500px; line-height: 21px; letter-spacing: 0.6px; color: #252423; border-bottom: 1px solid #b8dcff; }
.kpi-value { text-align: center; font-family: Roboto, sans-serif; font-weight: 400; font-size: 36px; line-height: 62px; letter-spacing: -0.300px; color: #201f1e; }
.kpi-total { width: 208px; }
.kpi-active { width: 208px; margin-left: 13px; }
.kpi-death { width: 190px; margin-left: 12px; }
.kpi-recovered { width: 225px; margin-left: 7px; }
.kpi-serious { width: 173px; margin-left: 13px; margin-top: -1px; border-color: #8a8886; }

/* charts */
.chart-row { display: flex; margin-top: 8px; }
.chart-col { width: 403px; flex: none; }
.chart { display: block; }
.barchart { margin-top: 5px; }
.panel { box-sizing: border-box; border: 1px solid #3b3a39; background-color: #fff; }
.panel-donut { height: 240px; }
.panel-top5 { height: 350px; margin-top: 9px; }
.panel-head { height: 20px; background-color: #118dff; text-align: center; font-family: Roboto, sans-serif; font-size: 15.500px; line-height: 22px; letter-spacing: 0.500px; color: #252423; border-bottom: 1px solid #b8dcff; }
.head-top5 { font-size: 17.500px; letter-spacing: 0.500px; line-height: 22px; }
.tx { font-family: Roboto, sans-serif; font-size: 12px; fill: #777; }
.tx-legend { font-size: 13px; fill: #666; }
.ta-end { text-anchor: end; }
.ta-mid { text-anchor: middle; }
.grid { stroke: #c8c6c4; stroke-width: 1; stroke-dasharray: 1 6; fill: none; }
.bar-labels text { font-family: Roboto, sans-serif; font-size: 12px; fill: #666; text-anchor: end; }
.icon-letter { font-family: "Open Sans", sans-serif; font-size: 26px; fill: #2b88d8; text-anchor: middle; }

.focus-frame { position: absolute; left: 0; top: 0; right: 0; bottom: 0; border: 2px dotted #444; border-top: none; pointer-events: none; z-index: 3; }

/* filters pane */
.filters-pane { width: 41px; flex: none; box-sizing: border-box; background-color: #fff; border-left: 1px solid #a19f9d; position: relative; }
.filters-pane .chev { position: absolute; left: 15px; top: 20px; }
.funnel { position: absolute; left: 17px; top: 75px; }
.side-title { writing-mode: vertical-rl; position: absolute; font-weight: 600; line-height: 20px; }
.filters-title { left: 9px; top: 109px; font-size: 17.500px; color: #252423; }

.pagebar { height: 44px; display: flex; padding-left: 0; box-sizing: border-box; position: relative; background-color: #f3f2f1; }
.page-nav { position: absolute; left: 5px; top: 15px; }
.nav-next { left: 34px; }
.page-tab { margin-left: 50px; width: 94px; box-sizing: border-box; background-color: #fff; border-bottom: 5px solid #f2c811; border-left: 1px solid #c8c6c4; text-align: center; font-size: 14px; line-height: 43px; }
.page-add { width: 50px; height: 40px; margin-top: 2px; background-color: #f2c811; position: relative; }
.page-add span { position: absolute; left: 19px; top: 18px; width: 13px; height: 4px; background-color: #777; }
.page-add span::after { content: ""; position: absolute; left: 4.500px; top: -4.500px; width: 4px; height: 13px; background-color: #777; }

/* visualizations pane */
.viz-pane { width: 42px; flex: none; box-sizing: border-box; border-left: 1px solid #dcdad8; position: relative; }
.viz-pane .chev { position: absolute; left: 16px; top: 20px; }
.viz-title { left: 8px; top: 76px; font-size: 18.500px; color: #3b3a39; }

/* fields pane */
.fields-pane { width: 225px; flex: none; box-sizing: border-box; border-left: 1px solid #dcdad8; }
.fields-head { height: 65px; box-sizing: border-box; display: flex; justify-content: space-between; align-items: center; padding: 0 15px 4px 15px; font-size: 18px; font-weight: 600; color: #3b3a39; }
.fields-search { margin-left: 5px; width: 215px; height: 37px; box-sizing: border-box; background-color: #fff; border: 1px solid #d2d0ce; border-radius: 3px; display: flex; align-items: center; font-size: 14.500px; color: #323130; }
.fields-search svg { margin-left: 14px; margin-right: 11px; }
.fields-table { margin-top: 6px; height: 50px; border-top: 1px solid #e1dfdd; box-sizing: border-box; display: flex; align-items: center; position: relative; font-size: 14px; padding: 5px 0 0 59px; }
.tbl-chev { position: absolute; left: 4px; top: 23px; }
.tbl-icon { position: absolute; left: 28px; top: 21px; }
.tbl-badge { position: absolute; left: 37px; top: 30px; width: 15px; height: 15px; border-radius: 50%; background-color: #f2c811; display: flex; align-items: center; justify-content: center; }
.field-row { height: 30px; display: flex; align-items: center; padding-left: 39px; position: relative; font-size: 14.500px; color: #323130; }
.field-row .box { width: 15px; height: 15px; box-sizing: border-box; border: 1px solid #605e5c; border-radius: 3px; flex: none; margin-right: 6px; display: flex; align-items: center; justify-content: center; }
.field-row .box-on { background-color: #f2c811; border-color: #f2c811; }
.field-row b { width: 23px; padding-left: 2px; flex: none; font-size: 18px; font-weight: 600; line-height: 20px; color: #323130; display: flex; align-items: center; }
.field-row b svg { margin-left: -2px; }
.row-chev { position: absolute; left: 14px; top: 10px; }

.statusbar { height: 29px; flex: none; box-sizing: border-box; border-top: 1px solid #dcdad8; border-bottom: 1px solid #8a8886; padding-left: 7px; font-size: 14.500px; line-height: 27px; color: #555; background-color: #f3f2f1; }

/* taskbar */
.taskbar { height: 51px; flex: none; background: linear-gradient(90deg, #050505, #0d0c0c 55%, #060606); display: flex; position: relative; color: #ddd; }
.task { width: 62.200px; flex: none; display: flex; align-items: center; justify-content: center; position: relative; }
.task-start { width: 60px; }
.task-open { background-color: #454545; }
.task:nth-child(7)::after, .task-open::after, .task:nth-child(13)::after, .task:nth-child(15)::after { content: ""; position: absolute; left: 6px; right: 6px; bottom: 0; height: 3px; background-color: #ff9a9a; }
.task-open::after { left: 0; right: 0; }
.tray { position: absolute; left: 0; right: 0; top: 0; bottom: 0; pointer-events: none; }
.tray > * { position: absolute; }
.tray-desktop { left: 1525px; top: 16px; font-size: 14px; line-height: 20px; }
.tray-more { left: 1589px; top: 0; font-size: 15px; color: #fff; }
.tray-up { left: 1613px; top: 22px; }
.tray-wifi { left: 1645px; top: 18px; }
.tray-battery { left: 1670px; top: 18px; }
.tray-sound { left: 1698px; top: 16px; }
.tray-lang { left: 1733px; top: 16px; font-size: 13.500px; line-height: 20px; }
.tray-clock { left: 1775px; top: 4px; width: 72px; text-align: center; font-size: 14px; line-height: 23px; }
.tray-note { left: 1868px; top: 15px; }
.tray-note svg { display: block; }
.tray-note span { position: absolute; left: 9px; top: 8px; width: 18px; height: 22px; border-radius: 50%; background-color: #444; border: 1px solid #888; text-align: center; font-size: 14px; line-height: 22px; color: #fff; box-sizing: border-box; }
```
